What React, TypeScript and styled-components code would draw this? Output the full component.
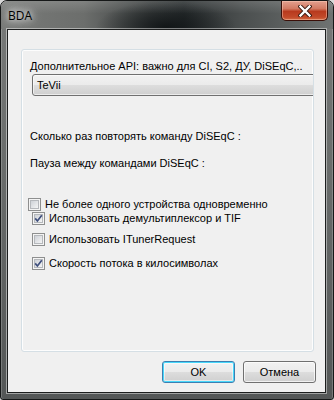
import React from "react";
import styled, { createGlobalStyle } from "styled-components";

const GlobalStyle = createGlobalStyle`
  html, body {
    margin: 0;
    padding: 0;
    background: #d8d8d8;
  }
  * { box-sizing: border-box; }
`;

const Window = styled.div`
  width: 334px;
  height: 400px;
  display: flex;
  flex-direction: column;
  border: 1px solid #161818;
  border-radius: 7px 7px 3px 3px;
  overflow: hidden;
  background: linear-gradient(180deg, #787a79 0%, #6a6d6c 40%, #545757 100%);
  box-shadow: inset 0 1px 0 rgba(255, 255, 255, 0.55), inset 1px 0 0 rgba(255, 255, 255, 0.2),
    inset -1px 0 0 rgba(255, 255, 255, 0.2);
`;

const TitleBar = styled.div`
  height: 28px;
  flex: none;
  display: flex;
  align-items: flex-start;
  background:
    linear-gradient(180deg, rgba(255, 255, 255, 0.14) 0%, rgba(255, 255, 255, 0) 45%),
    radial-gradient(ellipse 70px 26px at 165px 26px, rgba(12, 16, 18, 0.85), rgba(12, 16, 18, 0) 100%),
    linear-gradient(90deg, #797b79 0%, #6c6e6c 25%, #3b3f3f 45%, #2a2f30 55%, #4a4e4e 72%, #6f7372 100%);
`;

const Title = styled.div`
  margin: 7px 0 0 7px;
  font-family: "Open Sans", "Liberation Sans", sans-serif;
  font-size: 12px;
  line-height: 16px;
  color: #000;
  text-shadow: 0 0 6px rgba(255, 255, 255, 0.9), 0 0 10px rgba(255, 255, 255, 0.8),
    0 0 14px rgba(255, 255, 255, 0.6);
`;

const CloseButton = styled.div`
  margin-left: auto;
  margin-right: 5px;
  width: 47px;
  height: 20px;
  display: flex;
  align-items: center;
  justify-content: center;
  border: 1px solid #3a0f08;
  border-top: none;
  border-radius: 0 0 5px 5px;
  background: linear-gradient(180deg, #e3a08f 0%, #d27a63 40%, #b83a1e 55%, #c24a2a 85%, #d36a44 100%);
  box-shadow: inset 0 0 0 1px rgba(255, 210, 190, 0.45);
`;

const Frame = styled.div`
  flex: 1;
  display: flex;
  padding: 0 7px 6px 6px;
`;

const Client = styled.div`
  flex: 1;
  display: flex;
  flex-direction: column;
  border: 1px solid #1c1e1e;
  box-shadow: 0 0 0 1px rgba(255, 255, 255, 0.45);
  background: #f0f0f0;
  padding: 19px 0 0 13px;
  font-family: "Liberation Sans", Arial, sans-serif;
  font-size: 11px;
  color: #000;
`;

const GroupBox = styled.div`
  width: 293px;
  height: 303px;
  border: 1px solid #d5dfe5;
  border-radius: 3px;
  box-shadow: inset 0 0 0 1px #fdfdfd;
  overflow: hidden;
  display: flex;
  flex-direction: column;
`;

const Label = styled.div<{ $top: number }>`
  margin: ${(p) => p.$top}px 0 0 8px;
  height: 13px;
  line-height: 13px;
  white-space: nowrap;
`;

const Combo = styled.div`
  margin: 1px 0 0 10px;
  width: 300px;
  height: 22px;
  flex: none;
  display: flex;
  align-items: center;
  padding-left: 4px;
  border: 1px solid #707070;
  border-radius: 3px;
  background: linear-gradient(180deg, #f2f2f2 0%, #ebebeb 50%, #dddddd 51%, #cfcfcf 100%);
  box-shadow: inset 0 0 0 1px rgba(255, 255, 255, 0.6);
`;

const CheckRow = styled.div<{ $top: number; $indent: number }>`
  margin: ${(p) => p.$top}px 0 0 ${(p) => p.$indent}px;
  height: 13px;
  display: flex;
  align-items: center;
  gap: 4px;
  white-space: nowrap;
  line-height: 13px;
`;

const ButtonRow = styled.div`
  display: flex;
  justify-content: flex-end;
  gap: 8px;
  margin-top: 9px;
  padding-right: 9px;
`;

const Button = styled.div<{ $default?: boolean }>`
  width: 73px;
  height: 22px;
  display: flex;
  align-items: center;
  justify-content: center;
  border: 1px solid ${(p) => (p.$default ? "#3c7fb1" : "#707070")};
  border-radius: 3px;
  background: linear-gradient(180deg, #f2f2f2 0%, #ebebeb 50%, #dddddd 51%, #cfcfcf 100%);
  box-shadow: ${(p) =>
    p.$default
      ? "inset 0 0 0 1px #48d8fb, inset 0 0 0 2px rgba(255,255,255,0.5)"
      : "inset 0 0 0 1px rgba(255,255,255,0.7)"};
  font-size: 11px;
`;

const CheckBox = ({ checked }: { checked?: boolean }) => (
  <svg width="13" height="13" viewBox="0 0 13 13" style={{ flex: "none" }}>
    <defs>
      <linearGradient id="cbg" x1="0" y1="0" x2="1" y2="1">
        <stop offset="0" stopColor="#cbcfd5" />
        <stop offset="1" stopColor="#f7f7f7" />
      </linearGradient>
    </defs>
    <rect x="0.5" y="0.5" width="12" height="12" fill="#f4f4f4" stroke="#8e8f8f" />
    <rect x="2.5" y="2.5" width="8" height="8" fill="url(#cbg)" stroke="#b5b8bc" />
    {checked && (
      <path d="M3.2 6.4 L5.4 9 L9.8 3.2" fill="none" stroke="#3f4f7d" strokeWidth="1.7" />
    )}
  </svg>
);

const CloseGlyph = () => (
  <svg width="14" height="12" viewBox="0 0 14 12">
    <path
      d="M2.5 1.5 L11.5 10.5 M11.5 1.5 L2.5 10.5"
      stroke="#3a1a12"
      strokeWidth="4.2"
      strokeLinecap="square"
    />
    <path
      d="M2.5 1.5 L11.5 10.5 M11.5 1.5 L2.5 10.5"
      stroke="#ffffff"
      strokeWidth="2.4"
      strokeLinecap="square"
    />
  </svg>
);

export default function App() {
  return (
    <>
      <GlobalStyle />
      <Window>
        <TitleBar>
          <Title>BDA</Title>
          <CloseButton>
            <CloseGlyph />
          </CloseButton>
        </TitleBar>
        <Frame>
          <Client>
            <GroupBox>
              <Label $top={10}>Дополнительное API: важно для CI, S2, ДУ, DiSEqC,..</Label>
              <Combo>TeVii</Combo>
              <Label $top={34}>Сколько раз повторять команду DiSEqC :</Label>
              <Label $top={14}>Пауза между командами DiSEqC :</Label>
              <CheckRow $top={28} $indent={6}>
                <CheckBox />
                Не более одного устройства одновременно
              </CheckRow>
              <CheckRow $top={1} $indent={10}>
                <CheckBox checked />
                Использовать демультиплексор и TIF
              </CheckRow>
              <CheckRow $top={8} $indent={10}>
                <CheckBox />
                Использовать ITunerRequest
              </CheckRow>
              <CheckRow $top={11} $indent={10}>
                <CheckBox checked />
                Скорость потока в килосимволах
              </CheckRow>
            </GroupBox>
            <ButtonRow>
              <Button $default>OK</Button>
              <Button>Отмена</Button>
            </ButtonRow>
          </Client>
        </Frame>
      </Window>
    </>
  );
}
